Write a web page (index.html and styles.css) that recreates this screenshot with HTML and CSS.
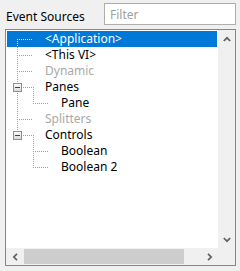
FILE: index.html
```html
<!DOCTYPE html>
<html lang="en">
<head>
  <meta charset="UTF-8">
  <title>Event Sources</title>
  <link rel="stylesheet" href="styles.css">
</head>
<body>
  <div class="top">
    <label for="filter">Event Sources</label>
    <input type="text" id="filter" class="filter" placeholder="Filter">
  </div>

  <div class="tree">
    <div class="list">
      <div class="row selected">&lt;Application&gt;</div>
      <div class="row">&lt;This VI&gt;</div>
      <div class="row disabled">Dynamic</div>
      <div class="row">Panes</div>
      <div class="row sub">Pane</div>
      <div class="row disabled">Splitters</div>
      <div class="row">Controls</div>
      <div class="row sub">Boolean</div>
      <div class="row sub">Boolean 2</div>

      <!-- guide lines and expander boxes -->
      <svg class="guides" width="212" height="218" viewBox="0 0 212 218">
        <g stroke="#cfe2f6" stroke-width="1" stroke-dasharray="1 1" fill="none">
          <path d="M11 9.5 H27"/>
          <path d="M11.5 9 V17"/>
        </g>
        <g stroke="#a0a0a0" stroke-width="1" stroke-dasharray="1 1" fill="none">
          <path d="M11.5 17 V105"/>
          <path d="M11 25.5 H27"/>
          <path d="M11 41.5 H27"/>
          <path d="M11 57.5 H27"/>
          <path d="M11 89.5 H27"/>
          <path d="M11 105.5 H27"/>
          <path d="M27.5 57 V73"/>
          <path d="M27 73.5 H43"/>
          <path d="M27.5 105 V137"/>
          <path d="M27 121.5 H43"/>
          <path d="M27 137.5 H43"/>
        </g>
        <defs>
          <linearGradient id="box" x1="0" y1="0" x2="0" y2="1">
            <stop offset="0" stop-color="#ffffff"/>
            <stop offset="1" stop-color="#d6d6d6"/>
          </linearGradient>
        </defs>
        <rect x="7.5" y="53.5" width="8" height="8" fill="url(#box)" stroke="#8e8f8f"/>
        <path d="M9 57.5 H14" stroke="#2b3f70"/>
        <rect x="7.5" y="101.5" width="8" height="8" fill="url(#box)" stroke="#8e8f8f"/>
        <path d="M9 105.5 H14" stroke="#2b3f70"/>
      </svg>
    </div>

    <div class="vscroll">
      <span class="arrow">
        <svg width="8" height="6" viewBox="0 0 8 6"><path d="M0.8 5 L4 1.8 L7.2 5" fill="none" stroke="#606060" stroke-width="1.7"/></svg>
      </span>
      <span class="arrow">
        <svg width="8" height="6" viewBox="0 0 8 6"><path d="M0.8 1 L4 4.2 L7.2 1" fill="none" stroke="#606060" stroke-width="1.7"/></svg>
      </span>
    </div>

    <div class="hscroll">
      <span class="arrow">
        <svg width="6" height="8" viewBox="0 0 6 8"><path d="M5 0.8 L1.8 4 L5 7.2" fill="none" stroke="#606060" stroke-width="1.7"/></svg>
      </span>
      <span class="thumb"></span>
      <span class="arrow">
        <svg width="6" height="8" viewBox="0 0 6 8"><path d="M1 0.8 L4.2 4 L1 7.2" fill="none" stroke="#606060" stroke-width="1.7"/></svg>
      </span>
    </div>

    <div class="corner"></div>
  </div>
</body>
</html>
```

FILE: styles.css
```css
* {
  box-sizing: border-box;
  font-family: 'Noto Sans', 'Open Sans', sans-serif;
}

body {
  margin: 0;
  background-color: #f0f0f0;
  color: #000;
  font-size: 12px;
}

.top {
  display: flex;
  justify-content: space-between;
  align-items: flex-end;
  padding: 3px 4px 0 6px;
}

.top label {
  line-height: 16px;
}

.filter {
  width: 132px;
  height: 22px;
  margin: 0;
  padding: 0 5px;
  border: 1px solid #adadad;
  background-color: white;
  font-size: 12px;
  outline: none;
}

.filter::placeholder {
  color: #a0a0a0;
}

.tree {
  display: grid;
  grid-template-columns: 1fr 17px;
  grid-template-rows: 1fr 17px;
  width: 231px;
  height: 237px;
  margin: 4px 4px 0 5px;
  border: 1px solid #828790;
  background-color: white;
}

.list {
  position: relative;
  overflow: hidden;
  padding: 1px 1px 0 1px;
}

.row {
  height: 16px;
  line-height: 16px;
  padding-left: 38px;
  white-space: nowrap;
}

.row.sub {
  padding-left: 54px;
}

.row.selected {
  background-color: #0078d7;
  color: white;
}

.row.disabled {
  color: #a8a8a8;
}

.guides {
  position: absolute;
  top: 0;
  left: 0;
}

.vscroll {
  display: flex;
  flex-direction: column;
  justify-content: space-between;
  background-color: #f0f0f0;
}

.vscroll .arrow {
  display: flex;
  align-items: center;
  justify-content: center;
  height: 17px;
}

.hscroll {
  display: flex;
  background-color: #f0f0f0;
}

.hscroll .arrow {
  display: flex;
  align-items: center;
  justify-content: center;
  width: 17px;
}

.hscroll .thumb {
  width: 160px;
  margin: 1px 0 1px 1px;
  background-color: #cdcdcd;
}

.hscroll .arrow:last-child {
  margin-left: auto;
}

.corner {
  background-color: #f0f0f0;
}
```
